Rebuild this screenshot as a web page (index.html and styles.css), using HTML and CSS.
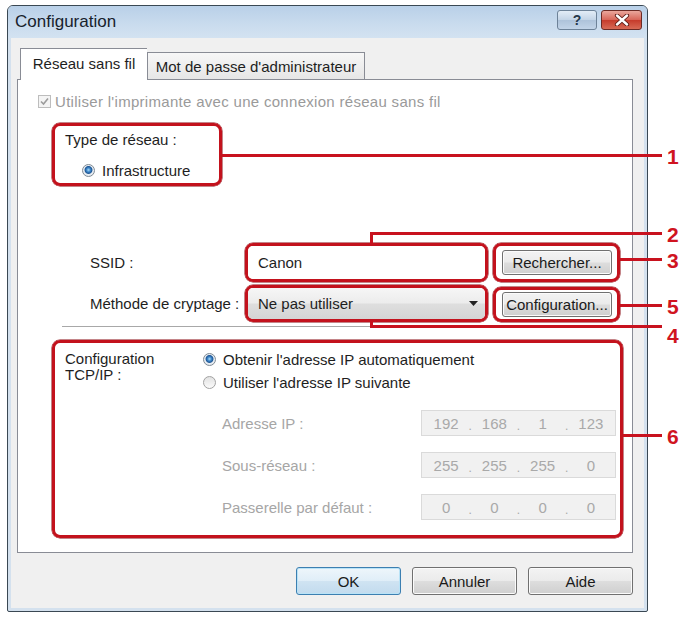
FILE: index.html
```html
<!DOCTYPE html>
<html lang="fr">
<head>
<meta charset="utf-8">
<title>Configuration</title>
<link rel="stylesheet" href="styles.css">
</head>
<body>
<div class="page">
  <div class="window">
    <div class="titlebar">
      <span class="title">Configuration</span>
      <div class="tb-buttons">
        <span class="tb-btn help">?</span>
        <span class="tb-btn close">
          <svg width="16" height="12" viewBox="0 0 16 12"><path d="M3 1.5 L13 10.5 M13 1.5 L3 10.5" stroke="#5a1a14" stroke-width="4.2" stroke-linecap="round"/><path d="M3 1.5 L13 10.5 M13 1.5 L3 10.5" stroke="#fff" stroke-width="2.4" stroke-linecap="round"/></svg>
        </span>
      </div>
    </div>
    <div class="client">
      <div class="tabs">
        <div class="tab active">Réseau sans fil</div>
        <div class="tab">Mot de passe d'administrateur</div>
      </div>
      <div class="panel">
        <div class="check-row">
          <span class="checkbox"><svg width="11" height="11" viewBox="0 0 11 11"><path d="M2 5.5 L4.5 8 L9 2.5" fill="none" stroke="#9c9c9c" stroke-width="1.6"/></svg></span>
          <span>Utiliser l'imprimante avec une connexion réseau sans fil</span>
        </div>

        <div class="callout box1">
          <div class="line">Type de réseau :</div>
          <div class="radio-row indent"><span class="radio on"></span><span>Infrastructure</span></div>
        </div>

        <div class="form-row row1">
          <span class="row-label">SSID :</span>
          <div class="callout box-field"><div class="textbox">Canon</div></div>
          <div class="callout box-btn"><div class="btn">Rechercher...</div></div>
        </div>
        <div class="form-row row2">
          <span class="row-label">Méthode de cryptage :</span>
          <div class="callout box-field combo-box">
            <div class="combo"><span>Ne pas utiliser</span>
              <svg width="9" height="5" viewBox="0 0 9 5"><path d="M0 0 H9 L4.5 5 Z" fill="#222"/></svg>
            </div>
          </div>
          <div class="callout box-btn box-btn2"><div class="btn">Configuration...</div></div>
        </div>

        <div class="sep"></div>

        <div class="callout box6">
          <div class="tcp-label">Configuration<br>TCP/IP :</div>
          <div class="tcp-options">
            <div class="radio-row"><span class="radio on"></span><span>Obtenir l'adresse IP automatiquement</span></div>
            <div class="radio-row second"><span class="radio"></span><span>Utiliser l'adresse IP suivante</span></div>
            <div class="ip-grid">
              <span class="ip-label">Adresse IP :</span>
              <div class="ip-field"><span>192</span><i>.</i><span>168</span><i>.</i><span>1</span><i>.</i><span>123</span></div>
              <span class="ip-label">Sous-réseau :</span>
              <div class="ip-field"><span>255</span><i>.</i><span>255</span><i>.</i><span>255</span><i>.</i><span>0</span></div>
              <span class="ip-label">Passerelle par défaut :</span>
              <div class="ip-field"><span>0</span><i>.</i><span>0</span><i>.</i><span>0</span><i>.</i><span>0</span></div>
            </div>
          </div>
        </div>
      </div>
      <div class="dialog-buttons">
        <div class="dbtn default">OK</div>
        <div class="dbtn">Annuler</div>
        <div class="dbtn">Aide</div>
      </div>
    </div>
  </div>

  <div class="annot">
    <div class="ln l1"></div>
    <div class="ln l2h"></div>
    <div class="ln l2v"></div>
    <div class="ln l3"></div>
    <div class="ln l5"></div>
    <div class="ln l4v"></div>
    <div class="ln l4h"></div>
    <div class="ln l6"></div>
    <span class="num n1">1</span>
    <span class="num n2">2</span>
    <span class="num n3">3</span>
    <span class="num n5">5</span>
    <span class="num n4">4</span>
    <span class="num n6">6</span>
  </div>
</div>
</body>
</html>
```

FILE: styles.css
```css
* { box-sizing: border-box; }

body {
  margin: 0;
  background: #ffffff;
  font-family: "Liberation Sans", Arial, sans-serif;
  font-size: 15px;
  color: #1e1e1e;
}

.page {
  position: relative;
  width: 690px;
  height: 617px;
  overflow: hidden;
}

/* ---------- window ---------- */
.window {
  margin: 5px 0 0 7px;
  width: 641px;
  height: 607px;
  border: 1px solid #3a4853;
  border-radius: 6px 6px 2px 2px;
  background: #d4e1ee;
  display: flex;
  flex-direction: column;
}

.titlebar {
  flex: none;
  height: 32px;
  display: flex;
  align-items: center;
  justify-content: space-between;
  padding: 0 5px 0 7px;
  background: linear-gradient(#b9d0e8, #cadcee 60%, #d3e2f1);
  border-radius: 5px 5px 0 0;
}

.title {
  font-size: 17px;
  color: #17222c;
}

.tb-buttons {
  align-self: flex-start;
  margin-top: 4px;
  display: flex;
  gap: 4px;
}

.tb-btn {
  width: 40px;
  height: 20px;
  border-radius: 3px;
  display: flex;
  align-items: center;
  justify-content: center;
}

.help {
  border: 1px solid #6d8298;
  background: linear-gradient(#e3edf7, #c4d5e7 48%, #aec3da 52%, #c2d4e8);
  font: bold 14px/1 "Liberation Sans", Arial, sans-serif;
  color: #26384b;
}

.close {
  width: 41px;
  border: 1px solid #6b2a24;
  background: linear-gradient(#eaa79c, #d8675a 48%, #c63c2c 52%, #d86a55);
}

.client {
  flex: 1;
  margin: 0 3px 3px;
  background: #f0f0f0;
  padding: 10px 11px 0 6px;
}

/* ---------- tabs ---------- */
.tabs {
  height: 31px;
  display: flex;
  align-items: flex-end;
  padding-left: 3px;
}

.tab {
  height: 27px;
  width: 218px;
  border: 1px solid #898c95;
  border-bottom: none;
  background: linear-gradient(#f7f7f7, #e6e6e6);
  display: flex;
  align-items: center;
  justify-content: center;
  white-space: nowrap;
  color: #1e1e1e;
}

.tab.active {
  width: 127px;
  height: 32px;
  margin-bottom: -1px;
  background: #ffffff;
  position: relative;
  z-index: 1;
  border-right: none;
  padding-bottom: 3px;
}

.panel {
  width: 616px;
  height: 474px;
  border: 1px solid #898c95;
  background: #ffffff;
  padding-top: 12px;
}

.check-row {
  height: 18px;
  margin-left: 20px;
  display: flex;
  align-items: center;
  gap: 4px;
  color: #9a9a9a;
  white-space: nowrap;
  letter-spacing: 0.3px;
}

.checkbox {
  width: 13px;
  height: 13px;
  border: 1px solid #bdbdbd;
  background: #f4f4f4;
  display: flex;
  align-items: center;
  justify-content: center;
}

/* ---------- callouts ---------- */
.callout {
  border: 3px solid #c3121d;
  border-radius: 8px;
  box-shadow: 0 0 0 0.5px #8a0d14;
}

.box1 {
  margin: 13px 0 0 34px;
  width: 170px;
  height: 63px;
  padding: 5px 0 0 10px;
}

.line {
  height: 18px;
  line-height: 18px;
  white-space: nowrap;
}

.radio-row {
  display: flex;
  align-items: center;
  gap: 7px;
  height: 16px;
  white-space: nowrap;
}

.radio-row.indent {
  margin: 12px 0 0 17px;
  height: 18px;
}

.radio {
  flex: none;
  width: 13px;
  height: 13px;
  border-radius: 50%;
  border: 1px solid #a2a2a2;
  background: linear-gradient(#e2e2e2, #fbfbfb);
}

.radio.on {
  border-color: #7f8a94;
  background: radial-gradient(circle at 50% 45%, #a9dcfa 0, #3d86c8 2px, #1f5796 3.5px, #e9eef3 4.4px, #dfe3e8 100%);
}

/* ---------- SSID / cryptage rows ---------- */
.form-row {
  display: flex;
  align-items: center;
  margin-left: 72px;
}

.row1 {
  margin-top: 57px;
  height: 39px;
}

.row2 {
  margin-top: 3px;
  height: 37px;
}

.row-label {
  width: 155px;
  white-space: nowrap;
}

.box-field {
  width: 243px;
  height: 100%;
  overflow: hidden;
}

.textbox {
  height: 100%;
  background: #ffffff;
  padding-left: 10px;
  display: flex;
  align-items: center;
}

.combo {
  height: 100%;
  padding: 0 7px 0 10px;
  display: flex;
  align-items: center;
  justify-content: space-between;
  background: linear-gradient(#f6f6f6, #ececec 48%, #dedede 52%, #d4d4d4);
}

.box-btn {
  width: 127px;
  height: 39px;
  margin-left: 5px;
  padding: 4px 5px 4px 6px;
}

.box-btn2 {
  height: 35px;
  align-self: flex-end;
  padding: 2px 5px 2px 6px;
}

.btn {
  height: 100%;
  border: 1px solid #707070;
  border-radius: 3px;
  background: linear-gradient(#f3f3f3, #ebebeb 48%, #dddddd 52%, #cfcfcf);
  box-shadow: inset 0 0 0 1px #fbfbfb;
  display: flex;
  align-items: center;
  justify-content: center;
  white-space: nowrap;
  color: #1a1a1a;
}

.sep {
  margin: 4px 0 0 44px;
  width: 556px;
  height: 2px;
  border-top: 1px solid #a8a8a8;
  border-bottom: 1px solid #ffffff;
}

/* ---------- TCP/IP ---------- */
.box6 {
  margin: 12px 0 0 34px;
  width: 571px;
  height: 198px;
  padding: 8px 0 0 10px;
  display: flex;
}

.tcp-label {
  width: 138px;
  line-height: 16px;
}

.radio-row.second {
  margin-top: 7px;
}

.ip-grid {
  margin: 20px 0 0 19px;
  display: grid;
  grid-template-columns: 199px 195px;
  grid-auto-rows: 26px;
  row-gap: 16px;
  align-items: center;
}

.ip-label {
  color: #a6a6a6;
  white-space: nowrap;
}

.ip-field {
  height: 26px;
  border: 1px solid #dadada;
  background: #f1f1f1;
  color: #a9a9a9;
  padding: 0 2px;
  display: grid;
  grid-template-columns: 1fr 4px 1fr 4px 1fr 4px 1fr;
  align-items: center;
  text-align: center;
}

.ip-field i {
  font-style: normal;
  font-size: 12px;
  line-height: 1;
  padding-top: 6px;
}

/* ---------- dialog buttons ---------- */
.dialog-buttons {
  margin-top: 14px;
  width: 616px;
  display: flex;
  justify-content: flex-end;
  gap: 11px;
}

.dbtn {
  width: 105px;
  height: 28px;
  border: 1px solid #707070;
  border-radius: 3px;
  background: linear-gradient(#f3f3f3, #ebebeb 48%, #dddddd 52%, #cfcfcf);
  box-shadow: inset 0 0 0 1px #fbfbfb;
  display: flex;
  align-items: center;
  justify-content: center;
  color: #1a1a1a;
}

.dbtn.default {
  border-color: #3c7fb1;
  background: linear-gradient(#eef6fb, #e0eef8 48%, #cfe3f2 52%, #c2dbee);
  box-shadow: inset 0 0 0 1px #b9e3f7;
}

/* ---------- annotations ---------- */
.annot {
  position: absolute;
  inset: 0;
  pointer-events: none;
}

.ln {
  position: absolute;
  background: #c8121e;
}

.l1 { left: 222px; top: 154px; width: 440px; height: 3px; }
.l2h { left: 370px; top: 232px; width: 292px; height: 3px; }
.l2v { left: 370px; top: 232px; width: 3px; height: 12px; }
.l3 { left: 620px; top: 258px; width: 42px; height: 3px; }
.l5 { left: 620px; top: 304px; width: 42px; height: 3px; }
.l4v { left: 370px; top: 321px; width: 3px; height: 7px; }
.l4h { left: 370px; top: 325px; width: 292px; height: 3px; }
.l6 { left: 623px; top: 434px; width: 39px; height: 3px; }

.num {
  position: absolute;
  left: 667px;
  font: bold 21px/20px "Liberation Sans", Arial, sans-serif;
  color: #d0141f;
}

.n1 { top: 147px; }
.n2 { top: 225px; }
.n3 { top: 251px; }
.n5 { top: 297px; }
.n4 { top: 326px; }
.n6 { top: 427px; }
```
